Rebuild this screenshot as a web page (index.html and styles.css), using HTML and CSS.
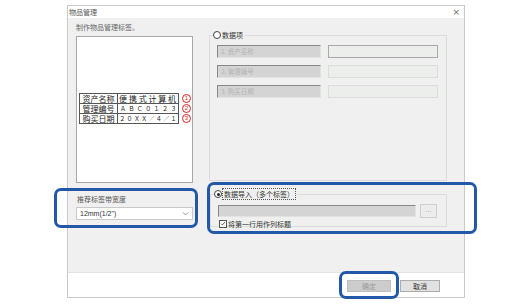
FILE: index.html
```html
<!DOCTYPE html>
<html lang="zh-CN">
<head>
<meta charset="utf-8">
<title>物品管理</title>
<link rel="stylesheet" href="styles.css">
</head>
<body>
<div class="window">
  <div class="titlebar">
    <span class="title">物品管理</span>
    <span class="close">×</span>
  </div>
  <div class="content">
    <div class="leftcol">
      <div class="intro">制作物品管理标签。</div>
      <div class="preview">
        <div class="labelrow">
          <table class="label">
            <tr><td class="k">资产名称</td><td class="v r1">便携式计算机</td></tr>
            <tr><td class="k">管理编号</td><td class="v r2">ＡＢＣ０１２３</td></tr>
            <tr><td class="k">购买日期</td><td class="v r3">２０ＸＸ／４／１</td></tr>
          </table>
          <div class="marks"><span class="mark">1</span><span class="mark">2</span><span class="mark">3</span></div>
        </div>
      </div>
      <div class="widthlabel">推荐标签带宽度</div>
      <div class="select"><span>12mm(1/2")</span><svg class="chev" width="7" height="5" viewBox="0 0 7 5"><path d="M1 1.5 L3.5 4 L6 1.5" fill="none" stroke="#888" stroke-width="0.9"/></svg></div>
    </div>
    <div class="rightcol">
      <div class="group g1">
        <div class="legend"><span class="radio"></span><span>数据项</span></div>
        <div class="frow"><div class="gfield">1. 资产名称</div><div class="efield first"></div></div>
        <div class="frow"><div class="gfield">2. 管理编号</div><div class="efield"></div></div>
        <div class="frow"><div class="gfield">3. 购买日期</div><div class="efield"></div></div>
      </div>
      <div class="group g2">
        <div class="legend"><span class="radio on"></span><span class="focus">数据导入（多个标签）</span></div>
        <div class="filerow"><div class="gfield wide"></div><div class="browse">...</div></div>
        <div class="chkrow"><span class="chk"><svg width="7" height="7" viewBox="0 0 7 7"><path d="M1.2 3.6 L2.8 5.2 L5.9 1.6" fill="none" stroke="#333" stroke-width="0.9"/></svg></span><span>将第一行用作列标题</span></div>
      </div>
    </div>
  </div>
  <div class="footer">
    <div class="btn disabled">确定</div>
    <div class="btn">取消</div>
  </div>
</div>
<div class="hl hl-width"></div>
<div class="hl hl-import"></div>
<div class="hl hl-ok"></div>
</body>
</html>
```

FILE: styles.css
```css
* { box-sizing: border-box; }
html, body { margin: 0; padding: 0; background: #ffffff; }
body {
  width: 531px;
  height: 306px;
  position: relative;
  overflow: hidden;
  font-family: "Noto Sans CJK SC", "Noto Sans", sans-serif;
  font-size: 7px;
  color: #333;
}
.window {
  margin: 5px 0 0 67px;
  width: 398px;
  height: 293px;
  border: 1px solid #c9c9c9;
  display: flex;
  flex-direction: column;
}
.titlebar {
  height: 12px;
  background: #fff;
  display: flex;
  align-items: center;
  justify-content: space-between;
  padding: 0 4px 0 1px;
  line-height: 12px;
  color: #555;
}
.title { font-size: 7px; }
.close { font-size: 9px; color: #666; font-family: "DejaVu Sans", sans-serif; }
.content {
  height: 254px;
  background: #f0f0f0;
  display: flex;
  padding-left: 8px;
}
.leftcol { width: 117px; display: flex; flex-direction: column; }
.intro { margin-top: 5px; height: 9px; line-height: 9px; color: #666; }
.preview {
  margin-top: 4px;
  height: 147px;
  background: #fff;
  border: 1px solid #a8a8a8;
  padding: 56px 0 0 2px;
}
.labelrow { display: flex; align-items: flex-start; }
.label {
  border-collapse: collapse;
  border: 1px solid #555;
  color: #222;
  table-layout: fixed;
  width: 99px;
}
.label td {
  border: 1px solid #555;
  height: 10px;
  line-height: 9px;
  padding: 0;
  white-space: nowrap;
  overflow: hidden;
}
.label .k { width: 38px; text-align: center; font-size: 8px; }
.label .v { width: 61px; text-align: center; }
.label .r1 { font-size: 8px; letter-spacing: 1.8px; padding-left: 1px; }
.label .r2 { font-size: 6px; letter-spacing: 2.4px; padding-left: 2px; }
.label .r3 { font-size: 6px; letter-spacing: 1.3px; padding-left: 1px; }
.marks {
  display: flex;
  flex-direction: column;
  gap: 1px;
  margin-left: 3px;
  margin-top: 1px;
}
.mark {
  width: 9px;
  height: 9px;
  border: 1px solid #e02020;
  border-radius: 50%;
  color: #e02020;
  font-family: "Liberation Sans", sans-serif;
  font-size: 6px;
  line-height: 7px;
  text-align: center;
}
.widthlabel { margin-top: 12px; height: 8px; line-height: 8px; color: #555; padding-left: 1px; }
.select {
  margin-top: 4px;
  height: 13px;
  background: #fff;
  border: 1px solid #c8c8c8;
  display: flex;
  align-items: center;
  justify-content: space-between;
  padding: 0 3px 0 3px;
  color: #333;
  font-family: "Liberation Sans", sans-serif;
}
.chev { display: block; }
.rightcol { margin-left: 16px; width: 238px; display: flex; flex-direction: column; }
.group { border: 1px solid #dcdcdc; }
.legend {
  display: flex;
  align-items: center;
  width: max-content;
  height: 10px;
  line-height: 10px;
  margin: -6px 0 0 3px;
  background: #f0f0f0;
  padding-right: 2px;
  color: #333;
}
.radio {
  width: 8px;
  height: 8px;
  border: 1px solid #444;
  border-radius: 50%;
  background: #fff;
  margin-right: 1px;
  position: relative;
}
.radio.on::after {
  content: "";
  position: absolute;
  left: 1.5px;
  top: 1.5px;
  width: 3px;
  height: 3px;
  border-radius: 50%;
  background: #222;
}
.focus { outline: 1px dotted #555; outline-offset: 0; padding: 0 1px; }
.g1 { margin-top: 17px; height: 146px; }
.frow { display: flex; margin: 5px 0 0 7px; height: 13px; }
.frow + .frow { margin-top: 7px; }
.gfield {
  width: 104px;
  height: 13px;
  background: #d4d4d4;
  border-top: 1px solid #888;
  border-left: 1px solid #888;
  border-right: 1px solid #e2e2e2;
  border-bottom: 1px solid #e2e2e2;
  color: #b4b4b4;
  font-size: 6.5px;
  line-height: 11px;
  padding-left: 3px;
}
.efield {
  width: 110px;
  height: 13px;
  margin-left: 7px;
  background: #eceeec;
  border: 1px solid #dcdcdc;
}
.efield.first { border-color: #a9a9a9; }
.g2 { margin-top: 13px; height: 33px; margin-left: 1px; width: 237px; }
.filerow { display: flex; align-items: center; margin: 5px 0 0 7px; height: 14px; }
.gfield.wide { width: 198px; height: 12px; }
.browse {
  width: 17px;
  height: 14px;
  margin-left: 4px;
  border: 1px solid #cfcfcf;
  background: #ececec;
  color: #999;
  text-align: center;
  line-height: 10px;
  font-family: "Liberation Sans", sans-serif;
}
.chkrow { display: flex; align-items: center; margin: 1px 0 0 8px; height: 9px; color: #333; }
.chk {
  width: 8px;
  height: 8px;
  border: 1px solid #555;
  background: #fff;
  margin-right: 1px;
  display: flex;
  align-items: center;
  justify-content: center;
}
.chk svg { display: block; }
.footer {
  flex: 1;
  background: #fff;
  border-top: 1px solid #e4e4e4;
  display: flex;
  justify-content: flex-end;
  align-items: flex-start;
  padding: 7px 24px 0 0;
  gap: 9px;
}
.btn {
  height: 12px;
  width: 40px;
  border: 1px solid #adadad;
  background: #e1e1e1;
  text-align: center;
  line-height: 10px;
  color: #333;
}
.btn.disabled {
  width: 44px;
  border-color: #bfbfbf;
  background: #cccccc;
  color: #9a9a9a;
}
.hl {
  position: absolute;
  border: 3px solid #2358a8;
  border-radius: 7px;
}
.hl-width { left: 54px; top: 188px; width: 144px; height: 40px; }
.hl-import { left: 207px; top: 182px; width: 270px; height: 52px; }
.hl-ok { left: 339px; top: 271px; width: 60px; height: 28px; }
```
